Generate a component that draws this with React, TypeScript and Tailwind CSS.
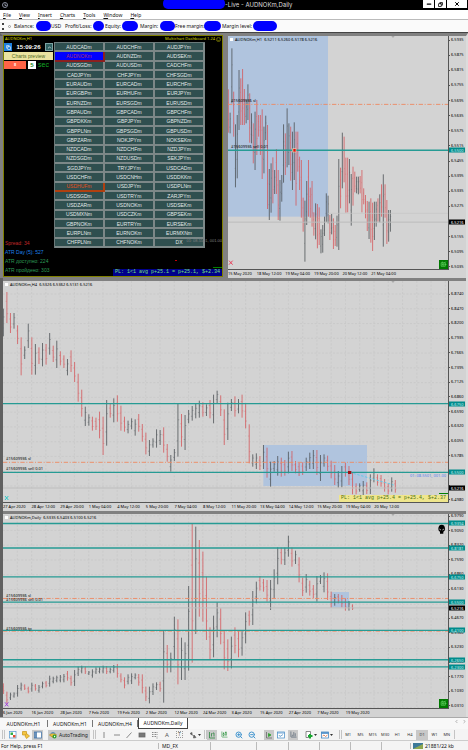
import type { ReactNode } from "react";
import {
  BarChart3,
  CandlestickChart,
  ChevronLeft,
  ChevronRight,
  ChevronUp,
  Copy,
  Minus,
  X,
  ZoomIn,
  ZoomOut,
} from "lucide-react";

const TEAL = "#269b94";

type Level = { price: number; kind: "level" | "stop" | "quote" };

// One bar per slot: direction (g = up, r = down), high and low in plot units
const h1Bars =
  "r160-290 g230-292 g37-202 r167-302 g265-454 g237-427 g102-282 r127-267 r99-267 r159-267 g192-262 g145-252 r172-320 g232-322 r262-382 g227-402 r192-357 r237-302 r237-357 r220-429 g272-412 g239-312 r267-519 g399-552 g382-530 r364-502 g402-474 r339-474 r402-552 g432-554 g417-497 g265-440 r292-417 g217-394 g262-387 r272-434 g287-462 g259-432 r287-509 r287-407 r362-462 r372-545 r485-587 g494-677 g435-567 r372-542 r455-545 r435-572 r529-599 g502-610 r504-637 r514-627 g580-652 g567-650 g542-600 g472-558 g479-562 r537-612 g534-595 r547-639 r567-630 g539-632 g369-642 r395-517 g290-457 r302-439 r365-530 r365-529 g369-502 g414-569 r392-509 r407-469 g422-472 g422-475 r420-472 r402-529 r457-505 r477-547 r495-585 g497-609 r487-620 r500-645 g497-612 g497-572 r487-557 g475-559 r445-542 g415-632 r445-545 r492-624 g522-617 g522-587";

const h4Bars =
  "g83-166 r33-126 r96-156 g96-143 r133-189 r169-283 g196-234 g128-201 r169-281 g189-281 r199-249 g186-256 r189-251 g156-221 r194-243 g179-261 r211-253 r223-261 g234-283 r208-273 r243-303 r278-362 r326-407 g377-435 g400-434 r407-449 r410-447 r392-472 r407-522 g357-494 r369-410 g352-424 r343-422 r374-449 r407-452 g419-457 g412-445 g415-464 r399-452 r429-482 r455-520 g477-525 g472-500 g445-500 g447-492 r439-515 r489-542 g522-572 g504-540 g369-527 r399-497 g402-507 g387-427 g375-419 g369-412 g359-410 r364-407 g370-405 r357-412 g341-427 g329-367 r343-405 r385-492 g365-477 g354-390 r346-407 g354-397 r341-410 r369-442 r430-547 g520-557 g517-564 r525-567 g492-564 r500-590 g542-617 g540-572 g525-584 r530-587 r537-584 g512-577 r510-570 r540-577 r545-585 r544-582 g530-570 g515-564 g507-564 r507-582 g522-600 g520-557 r524-570 r539-592 r552-612 g570-620 g555-619 r545-587 r555-612 r575-640 r607-640 g607-632 g600-642 r604-639 g580-639 g562-604 r580-614 r582-617 r594-632 r607-640 g589-632 r597-635";

const dailyBars =
  "r508-540 r533-568 g536-558 g535-551 g513-548 g506-530 r511-528 r518-538 g506-533 r510-530 g513-536 g503-523 r501-520 g485-518 g488-508 g485-505 g483-505 g480-505 r471-500 r485-515 g468-516 g458-486 g455-478 r458-480 g471-483 g466-491 g460-480 g460-478 g455-478 r456-480 g461-478 g453-476 r450-491 r478-505 r490-523 g481-511 g478-510 g478-496 r480-515 r481-538 r518-561 g518-568 g508-543 g505-528 r503-533 g348-566 r393-476 g416-475 g308-436 r316-511 g371-498 g385-498 g216-470 r28-446 g38-360 r78-308 r113-323 r188-378 r340-436 g305-430 g265-370 r283-391 r350-466 r376-471 g368-463 r340-418 r350-430 g348-425 g295-388 r290-335 g231-333 g203-268 r186-230 r195-233 r198-263 g198-288 g166-253 g100-211 r101-151 g101-153 g65-128 r101-158 g110-150 r130-205 r191-246 g180-236 r200-245 r213-253 g186-263 g183-210 g175-235 r178-258 r233-281 g240-275 r240-268 r243-280 r253-290 g261-290 r271-288";

const symbols = [
  "AUDCADm", "AUDCHFm", "AUDJPYm", "AUDNOKm", "AUDNZDm", "AUDSEKm",
  "AUDSGDm", "AUDUSDm", "CADCHFm", "CADJPYm", "CHFJPYm", "CHFSGDm",
  "EURAUDm", "EURCADm", "EURCHFm", "EURGBPm", "EURHUFm", "EURJPYm",
  "EURNZDm", "EURSGDm", "EURUSDm", "GBPAUDm", "GBPCADm", "GBPCHFm",
  "GBPDKKm", "GBPJPYm", "GBPNZDm", "GBPPLNm", "GBPSGDm", "GBPUSDm",
  "GBPZARm", "NOKJPYm", "NOKSEKm", "NZDCADm", "NZDCHFm", "NZDJPYm",
  "NZDSGDm", "NZDUSDm", "SEKJPYm", "SGDJPYm", "TRYJPYm", "USDCADm",
  "USDCHFm", "USDCNHm", "USDDKKm", "USDHUFm", "USDJPYm", "USDPLNm",
  "USDSGDm", "USDTRYm", "ZARJPYm", "USDZARm", "USDNOKm", "USDSEKm",
  "USDMXNm", "USDCZKm", "GBPSEKm", "GBPNOKm", "EURTRYm", "EURSEKm",
  "EURPLNm", "EURNOKm", "EURMXNm", "CHFPLNm", "CHFNOKm", "DX",
];

function Bars({ data, step }: { data: string; step: number }) {
  return (
    <>
      {data.split(" ").map((bar, i) => {
        const up = bar[0] === "g";
        const [high, low] = bar.slice(1).split("-").map(Number);
        const x = 1 + i * step;
        const tick = Math.min(4, step * 0.4);
        const open = high + (low - high) * (up ? 0.7 : 0.3);
        const close = high + (low - high) * (up ? 0.3 : 0.7);
        return (
          <g key={i} stroke={up ? "#4d5256" : "#d4595c"} fill="none">
            <path d={`M${x} ${high}V${low}`} strokeOpacity={0.8} strokeWidth={3} />
            <path
              d={`M${x - tick} ${open}H${x}M${x} ${close}H${x + tick}`}
              strokeOpacity={0.5}
              strokeWidth={2}
            />
          </g>
        );
      })}
    </>
  );
}

type ChartProps = {
  title: string;
  bars: string;
  step: number;
  width: number;
  height: number;
  heightClass: string;
  max: number;
  min: number;
  zone: [number, number, number, number];
  levels: Level[];
  prices: string[];
  axisPadding: string;
  times: string[];
  grid?: [number, number];
  drawing?: ReactNode;
  children?: ReactNode;
};

function Chart(props: ChartProps) {
  const { width, height, max, min, levels, grid } = props;
  const yOf = (price: number) => ((max - price) / (max - min)) * height;

  return (
    <section className="bg-[#d3d3d3] text-[4px] leading-[4px] text-black">
      <div className="flex">
        <div className="relative min-w-0 flex-1">
          <svg
            viewBox={`0 0 ${width} ${height}`}
            preserveAspectRatio="none"
            className={`block w-full ${props.heightClass}`}
          >
            {grid &&
              Array.from({ length: 31 }, (_, i) => (
                <path
                  key={`v${i}`}
                  d={`M${43 + i * 42.8} 0V${height}`}
                  stroke="#c5c5c5"
                  strokeWidth={2}
                  strokeDasharray="6 5"
                />
              ))}
            {grid &&
              Array.from({ length: 14 }, (_, i) => (
                <path
                  key={`h${i}`}
                  d={`M0 ${grid[0] + i * grid[1]}H${width}`}
                  stroke="#c5c5c5"
                  strokeWidth={2}
                  strokeDasharray="6 5"
                />
              ))}
            <rect
              x={props.zone[0]}
              y={props.zone[1]}
              width={props.zone[2]}
              height={props.zone[3]}
              fill="#b0c4de"
            />
            <path d={`M${width - 170} 0h10l-5 6z`} fill="#aaa" />
            <Bars data={props.bars} step={props.step} />
            {levels.map((level, i) => (
              <path
                key={i}
                d={`M0 ${yOf(level.price)}H${width}`}
                stroke={
                  level.kind === "level"
                    ? TEAL
                    : level.kind === "stop"
                      ? "#ee8a62"
                      : "#bdbdbd"
                }
                strokeWidth={level.kind === "level" ? 4 : 3}
                strokeDasharray={level.kind === "stop" ? "13 5 3 5" : undefined}
                strokeOpacity={level.kind === "stop" ? 0.9 : 1}
              />
            ))}
            {props.drawing}
          </svg>
          <h2 className="absolute left-[7px] top-[2px] whitespace-pre">
            {props.title}
          </h2>
          <span className="absolute left-[2px] top-[2px] size-[3px] bg-white" />
          {props.children}
        </div>

        <div
          className={`relative flex w-[18px] flex-col justify-between border-l border-[#555] ${props.axisPadding}`}
        >
          {props.prices.map((price, i) => (
            <div key={i} className="flex h-1 items-center gap-px">
              <span className="h-px w-px bg-[#555]" />
              {price}
            </div>
          ))}
          {levels
            .filter((level) => level.kind !== "stop")
            .map((level) => (
              <span
                key={level.price}
                style={{ top: `${(yOf(level.price) / height) * 100}%` }}
                className={`absolute left-0 w-4 -translate-y-1/2 py-px pl-[2px] leading-[3px] ${
                  level.kind === "level"
                    ? "bg-[#008b8b] text-[#c9eeee]"
                    : "bg-black text-white"
                }`}
              >
                {level.price.toFixed(4)}
              </span>
            ))}
        </div>
      </div>

      <div className="mr-[17px] flex h-[9px] overflow-hidden border-t border-[#555]">
        {props.times.map((time) => (
          <span
            key={time}
            style={{ width: `${(85.5 / width) * 100}%` }}
            className="shrink-0 whitespace-nowrap pt-[2px]"
          >
            {time}
          </span>
        ))}
      </div>
    </section>
  );
}

function GreenMark() {
  return (
    <span className="absolute bottom-0 right-0 flex size-[9px] items-center justify-center bg-[#007800]">
      <svg viewBox="0 0 12 12" className="size-[7px]" fill="none" stroke="#7bea7b">
        <path d="M2 3h7v6H2zM4 3V1M8 3l2-2M4 5h3v2H4zM9 6h2" />
      </svg>
    </span>
  );
}

function OrderLabel({ className, children }: { className: string; children: ReactNode }) {
  return (
    <span className={`absolute left-[3px] whitespace-nowrap ${className}`}>
      {children}
    </span>
  );
}

function Dashboard() {
  return (
    <section className="relative -mt-px mb-px ml-[3px] mr-[5px] flex flex-col border border-[#808000] bg-black font-['Liberation_Sans',Arial,sans-serif] text-[5px] leading-[6px]">
      <div className="flex h-[6px] items-center justify-between px-px font-['Noto_Sans',sans-serif] text-[4px] text-[#dada00]">
        <span>AUDNOKm,H1</span>
        <span className="flex items-center gap-px">
          Multichart Dashboard 1.24
          <svg viewBox="0 0 12 12" className="size-[5px]" fill="none" stroke="#dada00">
            <circle cx="6" cy="6" r="5" />
            <path d="M3 7q3 3 6 0M4 4v1M8 4v1" />
          </svg>
        </span>
      </div>

      <div className="flex pr-[17px]">
        <div className="flex w-[50px] shrink-0 flex-col gap-px pr-px pt-px">
          <div className="flex h-2 items-center justify-between">
            <button aria-label="Windows" className="flex h-2 w-2 items-center justify-center bg-[#1e80e0] text-white">
              <Copy size={5} strokeWidth={3} />
            </button>
            <span className="text-[6px] font-bold text-white">15:09:26</span>
            <button aria-label="Collapse" className="flex h-2 w-2 items-center justify-center border border-[#7da3a3] bg-[#2f6060] text-white">
              <ChevronUp size={5} strokeWidth={3} />
            </button>
          </div>
          <button className="h-2 bg-[#ebe3a0] text-[#4f6b1f]">
            Charts preview
          </button>
          <div className="flex h-2 items-center gap-[2px]">
            <button className="h-2 w-[22px] bg-[#ff6347] text-[4px] font-bold leading-[8px] text-white">
              II
            </button>
            <input
              aria-label="Seconds"
              defaultValue="5"
              className="h-2 w-2 bg-white text-center text-[6px] font-bold text-[#228b22]"
            />
            <span className="text-[7px] text-[#12a825]">sec</span>
          </div>
        </div>

        <div className="grid h-[206px] flex-1 grid-cols-3 grid-rows-22 border-l border-t border-[#6b7a7a]">
          {symbols.map((symbol) => (
            <button
              key={symbol}
              className={`flex items-center justify-center border-b-2 border-r-2 ${
                symbol === "AUDNOKm"
                  ? "border-[#8b2020] bg-[#0000ff] text-[#b03070]"
                  : symbol === "USDHUFm"
                    ? "border-[#b04010] bg-[#2f4f4f] text-[#e8501c]"
                    : "border-[#7c8888] bg-[#2f4f4f] text-[#e4eaea]"
              }`}
            >
              {symbol}
            </button>
          ))}
        </div>
      </div>

      <div className="absolute bottom-px left-px leading-[9px]">
        <p className="text-[#c02828]">Spread: 34</p>
        <p className="text-[#1e80e8]">ATR Day (5): 527</p>
        <p className="text-[#2e9b57]">ATR доступно: 224</p>
        <p className="text-[#2e9b57]">ATR пройдено: 303</p>
      </div>
      <span className="absolute bottom-[33px] right-0 text-[4px] leading-[4px] text-[#808080]">
        01: 08.5501, 001.00
      </span>
      <span className="absolute bottom-[15px] right-[45px] h-px w-[2px] bg-red-700" />
      <span className="absolute bottom-[8px] right-0 h-px w-[9px] bg-[#008000]" />
      <p className="absolute bottom-0 right-0 whitespace-nowrap bg-[#00008b] px-[2px] font-['Liberation_Mono',monospace] leading-[7px] text-[#7be07b]">
        {"PL: 1<1 avg p+25.1 = p+25.1, $+2.34"}
      </p>
    </section>
  );
}

function Blob({ className }: { className: string }) {
  return <span className={`h-[10px] shrink-0 rounded-[5px] bg-[#0000ff] ${className}`} />;
}

function Grip() {
  return <span className="h-[9px] w-[3px] shrink-0 border-x border-[#c4c4c4]" />;
}

function Tool({
  label,
  active,
  className = "w-[13px]",
  children,
}: {
  label: string;
  active?: boolean;
  className?: string;
  children: ReactNode;
}) {
  return (
    <button
      aria-label={label}
      className={`flex h-[10px] shrink-0 items-center justify-center text-[#555] ${className} ${
        active ? "bg-[#c8c8c8]" : ""
      }`}
    >
      {children}
    </button>
  );
}

function Glyph({ children }: { children: ReactNode }) {
  return (
    <svg viewBox="0 0 16 16" className="size-2" fill="none" stroke="#666" strokeWidth={1.5}>
      {children}
    </svg>
  );
}

function Caret() {
  return (
    <svg viewBox="0 0 6 4" className="ml-px h-[2px] w-[3px]">
      <path d="M0 0h6L3 4z" fill="#333" />
    </svg>
  );
}

function Toolbar() {
  return (
    <div className="flex h-[11px] items-center overflow-hidden bg-[#f4f4f4] pl-[2px]">
      <Grip />
      <Tool label="New chart" className="ml-px w-[14px]">
        <Glyph>
          <rect x="1" y="1" width="13" height="13" stroke="#5b9bd0" fill="#fff" />
          <rect x="3" y="3" width="5" height="5" fill="#2fae4a" stroke="none" />
          <rect x="8" y="8" width="5" height="5" fill="#e05030" stroke="none" />
        </Glyph>
      </Tool>
      <Tool label="Profiles" className="w-3">
        <Glyph>
          <path d="M1 1h8v7H1z" fill="#f4c542" stroke="#c99a1d" />
          <path d="M9 5l6 5-6 5-3-5z" fill="#f4c542" stroke="#c99a1d" />
        </Glyph>
      </Tool>
      <Tool label="Market watch" active className="w-[11px]">
        <Glyph>
          <rect x="1" y="2" width="14" height="12" fill="#fff" stroke="#3a6ea5" />
          <path d="M4 2v12" stroke="#3a6ea5" strokeWidth={3} />
        </Glyph>
      </Tool>
      <button className="ml-[5px] flex h-[10px] w-[42px] shrink-0 items-center gap-[2px] bg-[#c8c8c8] pl-px text-[5px] text-[#222]">
        <Glyph>
          <path d="M1 8l7-5 7 5-7 5z" fill="#e8bd3c" stroke="#b98c1a" />
          <path d="M2 5q6-6 12 0z" fill="#5790c8" stroke="none" />
          <circle cx="11" cy="11" r="4" fill="#2ba02b" stroke="none" />
          <path d="M10 9l3 2-3 2z" fill="#fff" stroke="none" />
        </Glyph>
        AutoTrading
      </button>
      <span className="w-[3px]" />
      <Grip />
      <Tool label="Vertical line" className="ml-px w-[13px]">
        <Glyph><path d="M8 2v12" /></Glyph>
      </Tool>
      <Tool label="Horizontal line"><Glyph><path d="M2 8h12" /></Glyph></Tool>
      <Tool label="Trend line" className="w-3"><Glyph><path d="M3 14L13 3" /></Glyph></Tool>
      <Tool label="Rectangle">
        <Glyph><rect x="2" y="4" width="12" height="8" fill="#777" /></Glyph>
      </Tool>
      <Tool label="Fibonacci">
        <Glyph><path d="M2 3h12M2 7h12M2 11h9M12 11v4" strokeDasharray="2 1" /></Glyph>
      </Tool>
      <Tool label="Text" className="w-3"><span className="text-[6px]">A</span></Tool>
      <Tool label="Text label">
        <span className="border border-dotted border-[#999] px-px text-[5px] leading-[5px]">T</span>
      </Tool>
      <Tool label="Arrows" className="w-[17px]">
        <Glyph>
          <path d="M2 5l4-2v5zM4 6l7 5M10 8l4 5-5 1z" fill="#555" />
        </Glyph>
        <Caret />
      </Tool>
      <span className="w-px" />
      <Grip />
      <Tool label="Bar chart" active className="w-[10px]">
        <Glyph><path d="M3 2v12h11M7 11V5h2M12 11V4h-2" stroke="#25843a" /></Glyph>
      </Tool>
      <Tool label="Candlesticks" className="w-[14px]">
        <CandlestickChart size={7} className="text-[#2f9440]" />
      </Tool>
      <Tool label="Zoom in" className="w-[15px]">
        <ZoomIn size={8} strokeWidth={3} className="text-[#4295cf]" />
      </Tool>
      <Tool label="Zoom out" className="w-3">
        <ZoomOut size={8} strokeWidth={3} className="text-[#4295cf]" />
      </Tool>
      <Tool label="Auto scroll" active className="ml-[6px] w-[10px]">
        <Glyph><path d="M3 2v12h11" /><path d="M7 5l5 3-5 3z" fill="#2ba02b" stroke="#2ba02b" /></Glyph>
      </Tool>
      <Tool label="Chart shift" className="w-[14px]">
        <Glyph>
          <rect x="1" y="2" width="14" height="12" stroke="#4b8fc8" fill="#fff" />
          <path d="M1 4h14M4 8l2 3 6-4" stroke="#4b8fc8" />
        </Glyph>
      </Tool>
      <Tool label="Volumes" active className="w-[10px]">
        <BarChart3 size={7} className="text-[#456]" />
      </Tool>
      <Tool label="Indicators" className="ml-[5px] w-4">
        <Glyph>
          <path d="M2 1h9v12H2z" fill="#fff" />
          <path d="M10 6v9M6 10h9" stroke="#18a830" strokeWidth={4} />
        </Glyph>
        <Caret />
      </Tool>
      <Tool label="Templates" className="w-4">
        <Glyph>
          <rect x="1" y="2" width="14" height="12" stroke="#3a80c0" fill="#fff" />
          <path d="M1 4h14" stroke="#3a80c0" strokeWidth={3} />
          <path d="M3 10l3-2 3 3 4-3" stroke="#d06030" />
        </Glyph>
        <Caret />
      </Tool>
      <span className="w-1" />
      <Grip />
      {["M1", "M5", "M15", "M30", "H1", "H4", "D1", "W1", "MN"].map((period) => (
        <button
          key={period}
          className={`h-[10px] flex-1 text-[4px] text-[#333] ${period === "D1" ? "bg-[#c8c8c8]" : ""}`}
        >
          {period}
        </button>
      ))}
      <span className="ml-px h-[9px] w-[14px] shrink-0 border-l border-[#c4c4c4]" />
    </div>
  );
}

// An empty entry is a gridline whose label sits behind a price tag
const h1Prices = [
  "6.5935", "6.5875", "6.5815", "6.5755", "6.5695", "6.5635", "6.5575", "6.5515",
  "6.5455", "6.5395", "6.5335", "6.5275", "", "6.5155", "6.5095", "6.5035",
];
const h4Prices = [
  "6.8740", "6.8470", "6.8200", "6.7935", "6.7665", "6.7395", "6.7125", "6.6860",
  "6.6590", "6.6320", "6.6055", "6.5785", "", "", "6.4980",
];
const dailyPrices = [
  "6.9790", "6.9050", "6.8320", "6.7590", "6.6860", "6.6130", "",
  "6.4670", "6.3960", "6.3230", "6.2500", "6.1770", "6.1030", "6.0310",
];

export default function App() {
  return (
    <div className="w-full overflow-hidden bg-[#808080] font-['Noto_Sans','Open_Sans',sans-serif] text-[5px] leading-[6px] text-[#111]">
      <header className="flex h-[10px] items-center bg-black text-[#ddd]">
        <svg viewBox="0 0 12 12" className="ml-[2px] size-[6px]" fill="none" stroke="#8a8fa0" strokeWidth={2}>
          <circle cx="6" cy="6" r="5" />
          <path d="M6 3v4h3" />
        </svg>
        <span className="mb-[3px] ml-[155px] h-[11px] w-[62px] rounded-[5px] bg-[#0000ff]" />
        <h1 className="whitespace-nowrap font-['Inter',sans-serif] text-[6px] leading-[10px]">
          -Live - AUDNOKm,Daily
        </h1>
        <div className="mb-[2px] ml-auto mr-px flex h-2 gap-px text-black">
          <button aria-label="Minimize" className="flex w-[11px] items-center justify-center bg-white">
            <Minus size={6} strokeWidth={5} />
          </button>
          <button aria-label="Restore" className="flex w-[11px] items-center justify-center bg-white">
            <Copy size={5} strokeWidth={4} className="-scale-x-100" />
          </button>
          <button aria-label="Close" className="flex w-5 items-center justify-center bg-white">
            <X size={6} strokeWidth={4} />
          </button>
        </div>
      </header>

      <nav className="flex h-[10px] items-center gap-2 border-b border-[#bbb] bg-white pl-[3px]">
        {["File", "View", "Insert", "Charts", "Tools", "Window", "Help"].map((item) => (
          <button key={item}>
            <span className="underline">{item[0]}</span>
            {item.slice(1)}
          </button>
        ))}
      </nav>

      <div className="flex h-[13px] items-center whitespace-nowrap border-b border-[#444] bg-[#fafafa] pl-[2px]">
        <span className="mr-1 h-[7px] border-l-2 border-dotted border-[#444]" />
        <span className="mr-[3px] size-[3px] rounded-full border border-[#999]" />
        <span className="w-[22px]">Balance:</span>
        <Blob className="w-[15px]" />
        <span className="w-[14px]">USD</span>
        <span className="w-7">Profit/Loss:</span>
        <Blob className="w-[11px]" />
        <span className="w-[18px] pl-px">Equity:</span>
        <Blob className="w-4" />
        <span className="w-[22px] pl-[2px]">Margin:</span>
        <Blob className="w-[15px]" />
        <span className="w-[29px]">Free margin:</span>
        <Blob className="w-[17px]" />
        <span className="w-8 pl-px">Margin level:</span>
        <Blob className="w-6" />
      </div>

      <main className="border-l-[3px] border-r-2 border-t-[3px] border-l-[#606060] border-r-[#dcdcdc] border-t-[#808080]">
        <div className="-ml-[3px] grid grid-cols-[228fr_238fr] bg-[#808080]">
          <Dashboard />
          <Chart
            title={"AUDNOKm,H1  6.5211 6.5260 6.5178 6.5216"}
            bars={h1Bars}
            step={5.344}
            width={660}
            height={699}
            heightClass="h-[233px]"
            max={6.5951}
            min={6.5031}
            zone={[0, 0, 300, 542]}
            levels={[
              { price: 6.5681, kind: "stop" },
              { price: 6.55, kind: "level" },
              { price: 6.5216, kind: "quote" },
            ]}
            prices={h1Prices}
            axisPadding="pt-[2px]"
            times={["15 May 2020", "18 May 12:00", "19 May 04:00", "19 May 20:00", "20 May 12:00", "21 May 04:00"]}
            drawing={
              <>
                <path d="M300 532H660" stroke="#c4c4c4" strokeWidth={2} />
                <rect x="193" y="337" width="12" height="12" fill="#f3c9a0" />
                <rect x="196" y="339" width="7" height="8" fill="#e01010" />
                <path d="M3 674l11 12M14 674l-11 12" stroke="#e8425c" strokeWidth={3} />
              </>
            }
          >
            <OrderLabel className="top-[63px]">#15609936 sl</OrderLabel>
            <OrderLabel className="top-[109px]">#15609936 sell 0.01</OrderLabel>
            <GreenMark />
          </Chart>
        </div>

        <div className="mt-[3px]">
          <Chart
            title={"AUDNOKm,H4  6.5326 6.5362 6.5131 6.5216"}
            bars={h4Bars}
            step={10.69}
            width={1335}
            height={663}
            heightClass="h-[221px]"
            max={6.8977}
            min={6.4962}
            zone={[781, 492, 311, 123]}
            levels={[
              { price: 6.675, kind: "level" },
              { price: 6.5683, kind: "stop" },
              { price: 6.55, kind: "level" },
              { price: 6.5216, kind: "quote" },
            ]}
            prices={h4Prices}
            axisPadding="pt-[11px]"
            grid={[39, 44.3]}
            times={[
              "27 Apr 2020", "28 Apr 12:00", "29 Apr 20:00", "1 May 04:00", "4 May 12:00",
              "5 May 20:00", "7 May 04:00", "8 May 12:00", "11 May 20:00", "13 May 04:00",
              "14 May 12:00", "15 May 20:00", "19 May 04:00", "20 May 12:00",
            ]}
            drawing={
              <>
                <path d="M1040 574L1172 612" stroke="#62c8e8" strokeWidth={3} strokeDasharray="7 5" />
                <rect x="1035" y="570" width="10" height="9" fill="#a01010" />
                <path d="M6 645l10 12M16 645l-10 12" stroke="#28c8c8" strokeWidth={3} />
              </>
            }
          >
            <OrderLabel className="top-[176px]">#15609936 sl</OrderLabel>
            <OrderLabel className="top-[186px]">#15609936 sell 0.01</OrderLabel>
            <span className="absolute right-[2px] top-[193px] text-[#5a82f0]">
              01: 08.5501, 001.00
            </span>
            <span className="absolute bottom-2 right-0 h-px w-[9px] bg-[#008000]" />
            <p className="absolute bottom-0 right-0 whitespace-nowrap bg-[#efe68c] px-[2px] font-['Liberation_Mono',monospace] text-[5px] leading-[7px] text-[#4a6d10]">
              {"PL: 1<1 avg p+25.4 = p+25.4, $+2.37"}
            </p>
          </Chart>
        </div>

        <div className="mt-[3px]">
          <Chart
            title={"AUDNOKm,Daily  6.5335 6.5403 6.5100 6.5216"}
            bars={dailyBars}
            step={10.69}
            width={1335}
            height={582}
            heightClass="h-[194px]"
            max={6.9864}
            min={6.0261}
            zone={[985, 234, 53, 46]}
            levels={[
              { price: 6.9394, kind: "level" },
              { price: 6.8181, kind: "level" },
              { price: 6.675, kind: "level" },
              { price: 6.5683, kind: "stop" },
              { price: 6.55, kind: "level" },
              { price: 6.5216, kind: "quote" },
              { price: 6.4065, kind: "stop" },
              { price: 6.41, kind: "level" },
              { price: 6.265, kind: "level" },
              { price: 6.23, kind: "level" },
            ]}
            prices={dailyPrices}
            axisPadding="pt-0"
            grid={[5, 44.3]}
            times={[
              "6 Jan 2020", "16 Jan 2020", "28 Jan 2020", "7 Feb 2020", "19 Feb 2020",
              "2 Mar 2020", "12 Mar 2020", "24 Mar 2020", "3 Apr 2020", "15 Apr 2020",
              "27 Apr 2020", "7 May 2020", "19 May 2020",
            ]}
            drawing={
              <>
                <path
                  d="M1306 45q0-13 10-13t10 13q0 6-5 8v6h-10v-6q-5-2-5-8z"
                  fill="#000"
                />
                <path d="M1309 45l5 3M1323 45l-5 3" stroke="#fff" strokeWidth={2} />
                <path d="M6 565l10 12M16 565l-10 12" stroke="#a040d8" strokeWidth={3} />
              </>
            }
          >
            <OrderLabel className="top-[80px]">#15609936 sl</OrderLabel>
            <OrderLabel className="top-[84px]">#15609936 sell 0.01</OrderLabel>
            <OrderLabel className="top-[113px]">#15609936 tp</OrderLabel>
            <GreenMark />
          </Chart>
        </div>
      </main>

      <div className="flex h-3 items-start border-t border-[#aaa] bg-[#f8f8f8]">
        {["AUDNOKm,H1", "AUDNOKm,H1", "AUDNOKm,H4", "AUDNOKm,Daily"].map((tab, i) => (
          <button
            key={i}
            className={
              i === 3
                ? "h-[11px] w-[50px] border border-t-0 border-[#444] bg-white"
                : "mt-[2px] h-[7px] w-[45px] border-r border-[#777] first:w-12"
            }
          >
            {tab}
          </button>
        ))}
        <span className="ml-auto mr-px flex gap-[3px] pt-px text-[#555]">
          <ChevronLeft size={5} />
          <ChevronRight size={5} />
        </span>
      </div>

      <Toolbar />

      <footer className="flex h-[10px] items-center border-t border-[#ccc] bg-[#f4f4f4] pl-px">
        <span className="w-[157px]">For Help, press F1</span>
        <span className="w-[52px] border-l border-[#bbb] pl-[3px]">MD_FX</span>
        <span className="h-2 w-[46px] border-l border-[#bbb]" />
        <span className="h-2 w-8 border-l border-[#bbb]" />
        <span className="h-2 w-[31px] border-l border-[#bbb]" />
        <span className="h-2 w-[31px] border-l border-[#bbb]" />
        <span className="h-2 w-[31px] border-l border-[#bbb]" />
        <span className="h-2 w-[29px] border-l border-[#bbb]" />
        <span className="flex items-center gap-[2px] whitespace-nowrap border-l border-[#bbb] pl-[2px]">
          <svg viewBox="0 0 10 6" preserveAspectRatio="none" className="h-[6px] w-[10px]">
            <path d="M0 0h10v6H0z" fill="#3b7898" />
            <path d="M0 6L10 1v5z" fill="#8ea850" />
          </svg>
          21881/22 kb
        </span>
      </footer>
    </div>
  );
}
